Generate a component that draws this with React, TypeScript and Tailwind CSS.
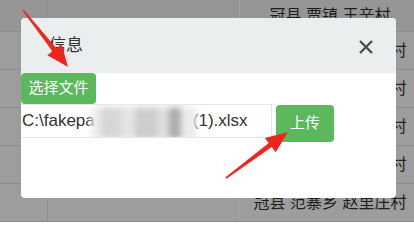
import React from "react";

const rows = [
  "冠县 贾镇 王辛村",
  "冠县 范寨乡 王庄庄村",
  "冠县 范寨乡 李庄庄村",
  "冠县 范寨乡 张庄庄村",
  "冠县 范寨乡 刘庄庄村",
  "冠县 范寨乡 赵里庄村",
];

export default function App() {
  return (
    <div
      className="relative w-[414px] h-[222px] overflow-hidden bg-[#9d9d9d] text-[#1e1e1e]"
      style={{ fontFamily: '"Liberation Sans", "Noto Sans CJK SC", sans-serif' }}
    >
      {/* background table */}
      <div className="flex flex-col">
        {rows.map((r, i) => (
          <div
            key={i}
            className={`flex shrink-0 border-b border-[#8c8c8c] ${i === 0 ? "h-[32px] bg-[#959595]" : "h-[38px]"}`}
          >
            <div className="w-[48px] shrink-0 border-r border-[#8e8e8e]" />
            <div className="w-[192px] shrink-0 border-r border-[#a4a4a4]" />
            <div className="flex-1 flex items-center justify-center whitespace-nowrap text-[16px] pl-[6px]">
              {r}
            </div>
          </div>
        ))}
      </div>

      {/* modal dialog */}
      <div className="absolute left-[21px] top-[18px] w-[375px] h-[180px] rounded-[4px] bg-white overflow-hidden flex flex-col">
        <div className="h-[55px] shrink-0 bg-[#eaeeee] flex items-center justify-between pl-[28px] pr-[22px]">
          <span className="text-[17px] text-[#333]">信息</span>
          <svg width="16" height="16" viewBox="0 0 16 16" className="mt-[2px]">
            <path d="M2 2 L14 14 M14 2 L2 14" stroke="#4d4d4d" strokeWidth="2.4" strokeLinecap="butt" />
          </svg>
        </div>
        <div className="flex flex-col">
          <div className="flex">
            <button className="h-[31px] w-[75px] rounded-[4px] bg-[#5cb85c] text-white text-[15px] flex items-center justify-center">
              选择文件
            </button>
          </div>
          <div className="flex items-start gap-[4px]">
            <div className="w-[251px] h-[34px] border border-[#e6e6e6] border-l-0 flex items-center pl-[1px] text-[17px] text-[#333] whitespace-nowrap overflow-hidden">
              <span>C:\fakepa</span>
              <span className="inline-flex h-[32px] w-[106px] -ml-[4px] -mr-[4px] blur-[3px] mt-[4px]">
                <span className="w-[10px] bg-[#ececec]" />
                <span className="w-[20px] bg-[#d6d6d6]" />
                <span className="w-[14px] bg-[#e4e4e4]" />
                <span className="w-[22px] bg-[#cdcdcd]" />
                <span className="w-[12px] bg-[#dedede]" />
                <span className="w-[12px] bg-[#adadad]" />
                <span className="w-[16px] bg-[#ececec]" />
              </span>
              <span>(1).xlsx</span>
            </div>
            <button className="mt-[1px] h-[37px] w-[58px] rounded-[4px] bg-[#5cb85c] text-white text-[15px] flex items-center justify-center">
              上传
            </button>
          </div>
        </div>
      </div>

      {/* annotation arrows */}
      <svg className="absolute left-0 top-0" width="414" height="222" viewBox="0 0 414 222">
        <polygon
          points="23.6,9.4 56.4,48.2 61.5,44.1 68,67 47.3,55.3 52.4,51.3 22.4,10.6"
          fill="#f0261e"
        />
        <polygon
          points="225.5,177.3 268.8,143.1 264.9,137.9 288,132 275.7,152.3 271.8,147.1 226.5,178.7"
          fill="#f0261e"
        />
      </svg>
    </div>
  );
}
